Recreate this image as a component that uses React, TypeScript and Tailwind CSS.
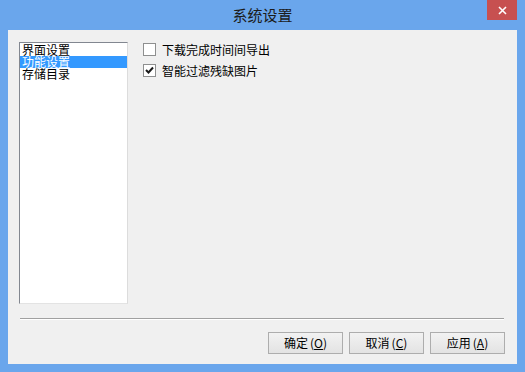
import React from "react";

const font = { fontFamily: '"SimSun", "Noto Sans CJK SC", sans-serif' };

function CheckRow({ label, checked }: { label: string; checked: boolean }) {
  return (
    <div className="flex h-[13px] items-center">
      <span className="flex h-[13px] w-[13px] items-center justify-center border border-[#8e8f8f] bg-white">
        {checked && (
          <svg width="9" height="9" viewBox="0 0 9 9">
            <path d="M1 4 L3.5 6.5 L8 1.5" fill="none" stroke="#1a1a1a" strokeWidth="2" />
          </svg>
        )}
      </span>
      <span className="ml-[6px] text-[12px] leading-[13px] text-black">{label}</span>
    </div>
  );
}

function DlgButton({ label, mnemonic }: { label: string; mnemonic: string }) {
  return (
    <button className="h-[22px] w-[75px] border border-[#adadad] bg-[#e5e5e5] bg-gradient-to-b from-[#f2f2f2] to-[#e3e3e3] text-[12px] leading-[20px] text-black">
      {label}
      <span className="ml-[2px]">
        (<span className="underline">{mnemonic}</span>)
      </span>
    </button>
  );
}

export default function App() {
  const items = ["界面设置", "功能设置", "存储目录"];
  const selected = 1;

  return (
    <div className="flex h-[372px] w-[525px] flex-col bg-[#6aa6ec]" style={font}>
      {/* title bar */}
      <div className="relative flex h-[30px] shrink-0 items-center justify-center">
        <span className="text-[15px] text-[#1b1b1b]">系统设置</span>
        <div className="absolute right-[8px] top-0 flex h-[20px] w-[30px] items-center justify-center bg-[#c75050]">
          <svg width="9" height="9" viewBox="0 0 9 9">
            <path d="M1 1 L8 8 M8 1 L1 8" stroke="#fff" strokeWidth="1.6" />
          </svg>
        </div>
      </div>

      {/* client area */}
      <div className="mx-[8px] mb-[8px] flex flex-1 flex-col bg-[#f0f0f0] pl-[11px] pr-[13px] pt-[12px]">
        <div className="flex">
          <div className="h-[262px] w-[109px] border border-b-[#e3e3e3] border-l-[#828790] border-r-[#dcdcdc] border-t-[#828790] bg-white pt-[1px]">
            {items.map((it, i) => (
              <div
                key={it}
                className={
                  "h-[12px] pl-[2px] text-[12px] leading-[12px] " +
                  (i === selected ? "bg-[#3399ff] text-white" : "text-black")
                }
              >
                {it}
              </div>
            ))}
          </div>
          <div className="ml-[15px] flex flex-col gap-[8px] pt-[1px]">
            <CheckRow label="下载完成时间间导出" checked={false} />
            <CheckRow label="智能过滤残缺图片" checked={true} />
          </div>
        </div>

        <div className="ml-[1px] mt-[14px] h-[2px] border-b border-t border-b-white border-t-[#a0a0a0]" />

        <div className="-mr-[1px] mt-[12px] flex justify-end gap-[6px]">
          <DlgButton label="确定" mnemonic="O" />
          <DlgButton label="取消" mnemonic="C" />
          <DlgButton label="应用" mnemonic="A" />
        </div>
      </div>
    </div>
  );
}
